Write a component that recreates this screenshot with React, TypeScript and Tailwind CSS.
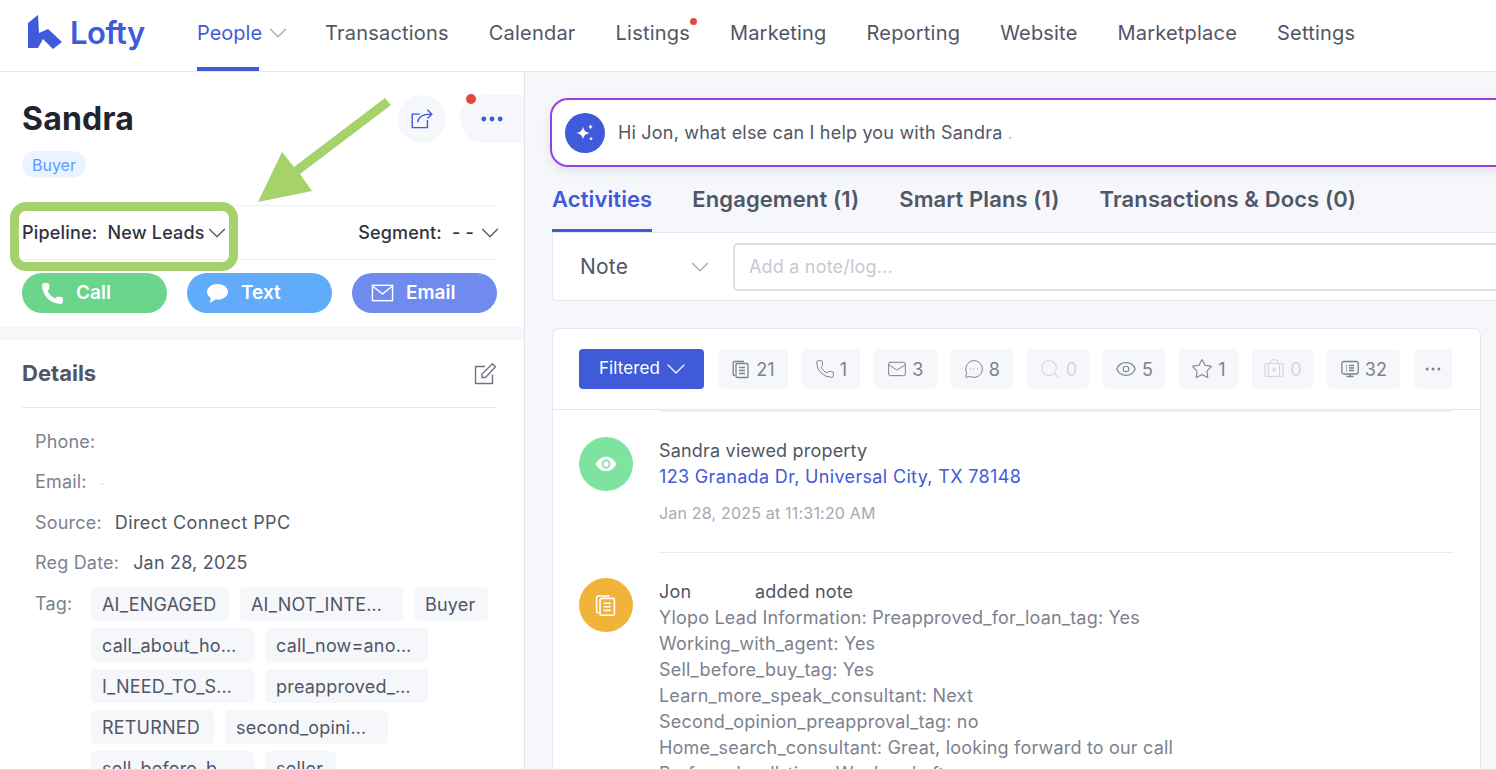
import type { ReactNode } from "react";
import {
  BriefcaseMedical,
  ChevronDown,
  Ellipsis,
  Eye,
  Mail,
  MessageCircleMore,
  Phone,
  Search,
  Star,
} from "lucide-react";

const navItems = ["Transactions", "Calendar", "Listings", "Marketing", "Reporting", "Website", "Marketplace", "Settings"];

const tabs = ["Engagement (1)", "Smart Plans (1)", "Transactions & Docs (0)"];

const noteLines = [
  "Ylopo Lead Information: Preapproved_for_loan_tag: Yes",
  "Working_with_agent: Yes",
  "Sell_before_buy_tag: Yes",
  "Learn_more_speak_consultant: Next",
  "Second_opinion_preapproval_tag: no",
  "Home_search_consultant: Great, looking forward to our call",
  "Preferred_call_time: Weekend after",
];

const tagRows = [
  [
    { text: "AI_ENGAGED", w: "w-[138px]" },
    { text: "AI_NOT_INTE…", w: "w-[163px]" },
    { text: "Buyer", w: "w-[74px]" },
  ],
  [
    { text: "call_about_ho…", w: "w-[163px]" },
    { text: "call_now=ano…", w: "w-[163px]" },
  ],
  [
    { text: "I_NEED_TO_S…", w: "w-[163px]" },
    { text: "preapproved_…", w: "w-[163px]" },
  ],
  [
    { text: "RETURNED", w: "w-[123px]" },
    { text: "second_opini…", w: "w-[163px]" },
  ],
  [
    { text: "sell_before_b…", w: "w-[163px]" },
    { text: "seller", w: "w-[71px]" },
  ],
];

function NotesIcon({ className }: { className?: string }) {
  return (
    <svg viewBox="0 0 20 20" fill="none" stroke="currentColor" strokeWidth="1.3" className={className}>
      <path d="M4 16.5H3.2a1 1 0 0 1-1-1V4a1.5 1.5 0 0 1 1.5-1.5H13" />
      <rect x="5" y="4.5" width="12" height="14" rx="1.2" />
      <path d="M8 8.5h6M8 11.5h6M8 14.5h6" />
    </svg>
  );
}

function MonitorIcon({ className }: { className?: string }) {
  return (
    <svg viewBox="0 0 20 20" fill="none" stroke="currentColor" strokeWidth="1.3" className={className}>
      <rect x="1.8" y="2.5" width="16.4" height="12.5" rx="2" />
      <path d="M6 6.5h1M9 6.5h5M6 9h1M9 9h5M6 11.5h1M9 11.5h5M6.5 17.5h7M10 15v2.5" />
    </svg>
  );
}

// wide flat chevron: the box is twice the visible width, margins pull it back
function Chevron({ className }: { className?: string }) {
  return <ChevronDown className={`-mx-[7.5px] -my-2 h-[30px] w-[30px] shrink-0 ${className ?? ""}`} strokeWidth={1} />;
}

function Chip({ icon, count, faded, w }: { icon: ReactNode; count?: string; faded?: boolean; w: string }) {
  return (
    <div
      className={`flex h-10 items-center justify-center gap-[5px] rounded-[5px] bg-[#f6f7fb] text-[18px] ${w} ${
        faded ? "text-[#d3d6de]" : "text-[#7d8290]"
      }`}
    >
      {icon}
      {count && <span>{count}</span>}
    </div>
  );
}

export default function App() {
  return (
    <div className="relative flex h-[770px] w-[1496px] flex-col overflow-hidden bg-white font-['Inter',sans-serif] tracking-[0.012em] text-[#515666]">
      <header className="flex h-[72px] shrink-0 items-stretch border-b border-[#e4e6ec] bg-white pl-[27px]">
        <div className="flex w-[170px] items-center gap-[7px] pb-[7px] text-[#3f5bd9]">
          <svg viewBox="0 0 36 36" className="h-[36px] w-[36px] shrink-0" fill="currentColor">
            <path d="M1 9 11 1l1 18 9-4 14 13-9 7-10-10-5 9H1z" />
          </svg>
          <span className="text-[31px] leading-none font-semibold tracking-[-0.5px]">Lofty</span>
        </div>
        <nav className="flex items-stretch gap-10 text-[20px] tracking-[0.2px]">
          <div className="relative flex items-center gap-[8px] pb-[6px] tracking-normal text-[#3f5bd9]">
            People
            <Chevron className="text-[#a4a9b5]" />
            <span className="absolute bottom-0 left-0 h-1 w-[62px] bg-[#3f5bd9]" />
          </div>
          {navItems.map((item) => (
            <div key={item} className="relative flex items-center pb-[6px]">
              {item}
              {item === "Listings" && (
                <span className="absolute top-[18px] -right-[7px] h-[7px] w-[7px] rounded-full bg-[#e2483f]" />
              )}
            </div>
          ))}
        </nav>
      </header>

      <div className="flex min-h-0 flex-1">
        <aside className="flex w-[525px] shrink-0 flex-col overflow-hidden border-r border-[#e4e6ec] bg-white">
          <div className="pr-[27px] pl-[22px]">
            <div className="flex h-[133px] justify-between">
              <div>
                <h1 className="mt-[27px] text-[32px] leading-[40px] font-bold text-[#20242f]">Sandra</h1>
                <span className="mt-[12px] inline-flex h-[27px] items-center rounded-full bg-[#eaf3ff] px-[10px] text-[16px] tracking-normal text-[#5b9dff]">
                  Buyer
                </span>
              </div>
              <div className="mt-[23px] -mr-[27px] flex h-12 gap-[14px]">
                <div className="flex h-12 w-12 items-center justify-center rounded-full bg-[#f6f7fb] text-[#3f5bd9]">
                  <svg viewBox="0 0 24 24" fill="none" stroke="currentColor" strokeWidth="1.3" className="h-[26px] w-[26px]">
                    <path d="M17 13v7H3V7.5h7" />
                    <path d="M8 15c.5-4.5 4-7.5 12.5-7.5M17 3.5l4 4-4 4" />
                  </svg>
                </div>
                <div className="relative flex h-12 w-[64px] items-center justify-center rounded-l-[24px] bg-[#f6f7fb] text-[#3f5bd9]">
                  <Ellipsis className="h-[28px] w-[28px]" strokeWidth={2.2} />
                  <span className="absolute -top-[1px] left-[6px] h-[10px] w-[10px] rounded-full bg-[#e2483f]" />
                </div>
              </div>
            </div>
            <div className="flex h-[55px] items-center justify-between border-y border-[#eef0f4] text-[18px] font-medium text-[#2f3340]">
              <div className="flex items-center gap-[5px]">
                <span>Pipeline:&nbsp; New Leads</span>
                <Chevron className="text-[#515666]" />
              </div>
              <div className="flex items-center gap-[8px]">
                <span>Segment:&nbsp; - -</span>
                <Chevron className="text-[#515666]" />
              </div>
            </div>
            <div className="mt-[13px] flex justify-between text-[19px] font-semibold tracking-normal text-white">
              <button className="flex h-10 w-[145px] items-center gap-[11px] rounded-full bg-[#6bd58c] pl-[18px]">
                <Phone className="h-[25px] w-[25px]" fill="currentColor" strokeWidth={0} />
                Call
              </button>
              <button className="flex h-10 w-[145px] items-center gap-[12px] rounded-full bg-[#60acfa] pl-[19px]">
                <svg viewBox="0 0 24 22" fill="currentColor" className="h-[21px] w-[23px]">
                  <path d="M12 1C5.9 1 1 4.6 1 9.2c0 2.6 1.6 4.9 4 6.400L4 21l6-3.700c.7.100 1.300.100 2 .100 6.100 0 11-3.600 11-8.200S18.100 1 12 1z" />
                </svg>
                Text
              </button>
              <button className="flex h-10 w-[145px] items-center gap-[12px] rounded-full bg-[#6f8bf0] pl-[19px]">
                <svg viewBox="0 0 24 20" fill="none" stroke="currentColor" strokeWidth="1.5" className="h-[20px] w-[23px]">
                  <rect x="1.500" y="2" width="21" height="16" />
                  <path d="m2 3 10 8 10-8" />
                </svg>
                Email
              </button>
            </div>
          </div>

          <div className="mt-[14px] h-[13px] shrink-0 bg-[#f6f7fb]" />

          <div className="pr-[27px] pl-[22px]">
            <div className="flex h-[68px] items-center justify-between border-b border-[#e4e6ec]">
              <h2 className="text-[22px] font-bold tracking-normal text-[#515666]">Details</h2>
              <svg viewBox="0 0 24 24" fill="none" stroke="#6f7482" strokeWidth="1.400" className="h-[24px] w-[24px]">
                <path d="M19.500 12.500V21.500H2.500V4.500H12" />
                <path d="M9 15.500v-3.500L19.500 1.800l3 3L12.500 15.500z" />
              </svg>
            </div>
            <dl className="pt-[13px] pl-[13px] text-[18px] text-[#7d8290]">
              <div className="flex h-[40.500px] items-center">
                <dt>Phone:</dt>
              </div>
              <div className="flex h-[40.500px] items-center gap-[14px]">
                <dt>Email:</dt>
                <dd className="text-[10px] text-[#a4a9b5]">.</dd>
              </div>
              <div className="flex h-[40.500px] items-center gap-[13px]">
                <dt>Source:</dt>
                <dd className="tracking-[0.39px] text-[#515666]">Direct Connect PPC</dd>
              </div>
              <div className="flex h-[40.500px] items-center gap-[14px]">
                <dt>Reg Date:</dt>
                <dd className="text-[#515666]">Jan 28, 2025</dd>
              </div>
              <div className="mt-[4px] flex">
                <dt className="w-[56px] shrink-0 pt-[3px]">Tag:</dt>
                <dd className="flex flex-col gap-[7px] text-[#515666]">
                  {tagRows.map((row, i) => (
                    <div key={i} className="flex gap-[11px]">
                      {row.map((tag) => (
                        <span key={tag.text} className={`flex h-[34px] items-center rounded-[5px] bg-[#f6f7fb] pl-[11px] ${tag.w}`}>
                          {tag.text}
                        </span>
                      ))}
                    </div>
                  ))}
                </dd>
              </div>
            </dl>
          </div>
        </aside>

        <main className="min-w-0 flex-1 overflow-hidden bg-[#f6f7fb] pt-[26px] pl-[25px]">
          <div className="flex h-[69px] w-[1000px] items-center gap-[13px] rounded-[18px] border-2 border-[#9b3fe0] bg-white pl-[13px] text-[18px] shadow-[0_4px_10px_rgba(60,70,110,0.12)]">
            <div className="flex h-10 w-10 items-center justify-center rounded-full bg-[#3f5bd9] text-white">
              <svg viewBox="0 0 24 24" fill="currentColor" className="h-[24px] w-[24px]">
                <path d="M10 5.500c.8 4 2.200 5.500 6.500 6.500-4.300 1-5.700 2.500-6.500 6.500-.8-4-2.200-5.500-6.500-6.500 4.300-1 5.700-2.500 6.500-6.500zM17.500 3c.4 1.800 1 2.400 2.500 2.800-1.500.4-2.100 1-2.500 2.800-.4-1.800-1-2.400-2.500-2.800 1.500-.4 2.100-1 2.500-2.800zM18 15.500c.3 1.500.8 2 2.200 2.300-1.400.3-1.900.8-2.200 2.300-.3-1.500-.8-2-2.200-2.300 1.400-.3 1.900-.8 2.200-2.300z" />
              </svg>
            </div>
            <span>
              Hi Jon, what else can I help you with Sandra <span className="text-[#c5c9d3]">.</span>
            </span>
          </div>

          <div className="mt-[18px] flex h-[47px] gap-10 pl-[2px] text-[22px] leading-[28px] font-semibold tracking-[0.1px]">
            <div className="border-b-[3px] border-[#3f5bd9] text-[#3f5bd9]">Activities</div>
            {tabs.map((tab) => (
              <div key={tab}>{tab}</div>
            ))}
          </div>

          <div className="ml-[2px] flex h-[69px] w-[1000px] items-center rounded-b-[5px] border border-[#e4e6ec] bg-white pl-[27px]">
            <div className="flex w-[153px] items-center justify-between pr-[26px] text-[21px]">
              Note
              <Chevron className="text-[#a4a9b5]" />
            </div>
            <input
              readOnly
              placeholder="Add a note/log..."
              className="h-[48px] flex-1 rounded-[5px] border-2 border-[#dcdfe6] bg-white pl-[14px] text-[18px] placeholder:text-[#c5c9d3]"
            />
          </div>

          <section className="mt-[27px] ml-[2px] w-[929px] rounded-t-[8px] border border-[#e4e6ec] bg-white pr-[27px] pl-[26px]">
            <div className="-mr-[27px] -ml-[26px] flex h-[81px] items-center gap-[14px] border-b border-[#e4e6ec] pl-[26px]">
              <button className="flex h-10 w-[125px] items-center justify-center gap-[8px] rounded-[4px] bg-[#3f5bd9] text-[17px] tracking-[0.1px] text-white">
                Filtered
                <ChevronDown className="-mx-2 -my-2 h-8 w-8" strokeWidth={0.9} />
              </button>
              <Chip w="w-[70px]" icon={<NotesIcon className="h-5 w-5" />} count="21" />
              <Chip w="w-[58px]" icon={<Phone className="h-5 w-5" strokeWidth={1.2} />} count="1" />
              <Chip w="w-[63px]" icon={<Mail className="h-5 w-5" strokeWidth={1.2} />} count="3" />
              <Chip w="w-[62px]" icon={<MessageCircleMore className="h-5 w-5" strokeWidth={1.2} />} count="8" />
              <Chip w="w-[62px]" icon={<Search className="h-[22px] w-[22px]" strokeWidth={1.2} />} count="0" faded />
              <Chip w="w-[62px]" icon={<Eye className="h-[22px] w-[22px]" strokeWidth={1.2} />} count="5" />
              <Chip w="w-[59px]" icon={<Star className="h-[22px] w-[22px]" strokeWidth={1.2} />} count="1" />
              <Chip w="w-[61px]" icon={<BriefcaseMedical className="h-[22px] w-[22px]" strokeWidth={1.2} />} count="0" faded />
              <Chip w="w-[73px]" icon={<MonitorIcon className="h-5 w-5" />} count="32" />
              <Chip w="w-[38px]" icon={<Ellipsis className="h-5 w-5" strokeWidth={1.6} />} />
            </div>

            <div className="ml-[80px] h-[2px] bg-[#f0f1f5]" />

            <article className="flex gap-[26px] pt-[25px]">
              <div className="flex h-[54px] w-[54px] shrink-0 items-center justify-center rounded-full bg-[#7fe3a0]">
                <svg viewBox="0 0 24 24" className="h-[24px] w-[24px]">
                  <path d="M1.500 12C4.500 7 8 4.800 12 4.800S19.500 7 22.500 12c-3 5-6.500 7.200-10.500 7.200S4.500 17 1.500 12z" fill="#fff" />
                  <circle cx="12" cy="12" r="3.600" fill="none" stroke="#7fe3a0" strokeWidth="1.800" />
                </svg>
              </div>
              <div className="flex-1 border-b border-[#e9ebf0] pt-[1px] pb-[26px] text-[18px] leading-[26px]">
                <p>Sandra viewed property</p>
                <p className="tracking-[0.34px] text-[#3f5bd9]">123 Granada Dr, Universal City, TX 78148</p>
                <p className="mt-[10px] text-[16px] text-[#a4a9b5]">Jan 28, 2025 at 11:31:20 AM</p>
              </div>
            </article>

            <article className="flex gap-[26px] pt-[25px]">
              <div className="flex h-[54px] w-[54px] shrink-0 items-center justify-center rounded-full bg-[#f0b43a] text-white">
                <NotesIcon className="h-[24px] w-[24px]" />
              </div>
              <div className="pt-[1px] text-[18px] leading-[26px] text-[#7d8290]">
                <p className="text-[#515666]">
                  <span className="inline-block w-[96px]">Jon</span>added note
                </p>
                {noteLines.map((line) => (
                  <p key={line}>{line}</p>
                ))}
              </div>
            </article>
          </section>
        </main>
      </div>

      {/* annotation drawn over the screenshot */}
      <div className="absolute top-[202px] left-[10px] h-[69px] w-[228px] rounded-[16px] border-[9px] border-[#a5d26a]" />
      <svg viewBox="0 0 140 110" className="absolute top-[95px] left-[256px] h-[110px] w-[140px]">
        <path d="M129 3 135 10 44 79 56 96 2 107 26 57 38 72Z" fill="#a5d26a" />
      </svg>
      <div className="absolute right-0 bottom-0 left-0 h-px bg-[#dfe1e7]" />
    </div>
  );
}
